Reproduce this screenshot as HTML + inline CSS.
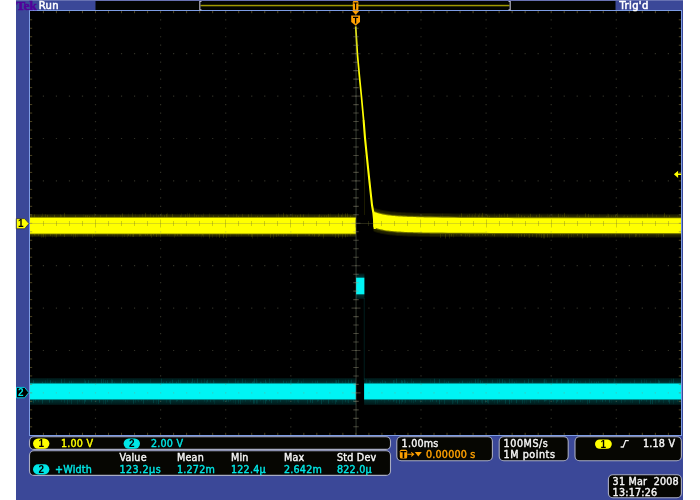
<!DOCTYPE html>
<html><head><meta charset="utf-8"><title>Tek Run Trig'd</title>
<style>
html,body{margin:0;padding:0;background:#fff;}
body{width:700px;height:500px;overflow:hidden;}
svg{display:block;will-change:transform;}
text{font-family:"DejaVu Sans","Liberation Sans",sans-serif;font-size:9.6px;letter-spacing:.2px;}
.w{fill:#f6f6f6;stroke:#f6f6f6;stroke-width:.4px;}
.y{fill:#ffff00;stroke:#ffff00;stroke-width:.4px;}
.c{fill:#00e6e6;stroke:#00e6e6;stroke-width:.4px;}
.o{fill:#ffa000;stroke:#ffa000;stroke-width:.4px;}
.k{fill:#000;stroke:#000;stroke-width:.4px;}
</style></head><body>
<svg width="700" height="500" viewBox="0 0 700 500">
<defs>
<linearGradient id="gy" x1="0" y1="0" x2="0" y2="1">
<stop offset="0.0000" stop-color="#ffff00" stop-opacity="0"/>
<stop offset="0.0500" stop-color="#ffff00" stop-opacity="0.11"/>
<stop offset="0.1250" stop-color="#ffff00" stop-opacity="0.19"/>
<stop offset="0.1583" stop-color="#ffff00" stop-opacity="0.46"/>
<stop offset="0.1958" stop-color="#ffff00" stop-opacity="1"/>
<stop offset="0.8167" stop-color="#ffff00" stop-opacity="1"/>
<stop offset="0.8542" stop-color="#ffff00" stop-opacity="0.46"/>
<stop offset="0.8875" stop-color="#ffff00" stop-opacity="0.19"/>
<stop offset="0.9500" stop-color="#ffff00" stop-opacity="0.11"/>
<stop offset="1.0000" stop-color="#ffff00" stop-opacity="0"/>
</linearGradient>
<linearGradient id="gc" x1="0" y1="0" x2="0" y2="1">
<stop offset="0.0000" stop-color="#00f4f4" stop-opacity="0"/>
<stop offset="0.0429" stop-color="#00f4f4" stop-opacity="0.11"/>
<stop offset="0.1750" stop-color="#00f4f4" stop-opacity="0.19"/>
<stop offset="0.2036" stop-color="#00f4f4" stop-opacity="0.46"/>
<stop offset="0.2357" stop-color="#00f4f4" stop-opacity="1"/>
<stop offset="0.7607" stop-color="#00f4f4" stop-opacity="1"/>
<stop offset="0.7929" stop-color="#00f4f4" stop-opacity="0.46"/>
<stop offset="0.8214" stop-color="#00f4f4" stop-opacity="0.19"/>
<stop offset="0.9571" stop-color="#00f4f4" stop-opacity="0.11"/>
<stop offset="1.0000" stop-color="#00f4f4" stop-opacity="0"/>
</linearGradient>
<linearGradient id="gp" x1="0" y1="0" x2="0" y2="1">
<stop offset="0.0000" stop-color="#00f4f4" stop-opacity="0"/>
<stop offset="0.0453" stop-color="#00f4f4" stop-opacity="0.11"/>
<stop offset="0.1396" stop-color="#00f4f4" stop-opacity="0.19"/>
<stop offset="0.1698" stop-color="#00f4f4" stop-opacity="0.46"/>
<stop offset="0.2038" stop-color="#00f4f4" stop-opacity="1"/>
<stop offset="0.7774" stop-color="#00f4f4" stop-opacity="1"/>
<stop offset="0.8113" stop-color="#00f4f4" stop-opacity="0.46"/>
<stop offset="0.8415" stop-color="#00f4f4" stop-opacity="0.19"/>
<stop offset="0.9547" stop-color="#00f4f4" stop-opacity="0.11"/>
<stop offset="1.0000" stop-color="#00f4f4" stop-opacity="0"/>
</linearGradient>
</defs>

<rect x="16" y="0" width="667" height="500" fill="#3b4898"/>
<rect x="16" y="0" width="667" height="1" fill="#6872b2"/>
<rect x="95.5" y="1" width="520" height="9.5" fill="#020402"/>
<rect x="29.5" y="10.5" width="652.0" height="425.0" fill="#000" stroke="#7d9ce4" stroke-width="1"/>
<rect x="30" y="213.5" width="325.9" height="24" fill="url(#gy)"/>
<path d="M373.4,207.3 L374.9,207.9 L376.4,208.4 L377.9,208.9 L379.4,209.3 L380.9,209.7 L382.4,210.0 L383.9,210.3 L385.4,210.6 L386.9,210.8 L388.4,211.0 L389.9,211.2 L391.4,211.4 L392.9,211.5 L394.4,211.6 L395.9,211.8 L397.4,211.9 L398.9,212.0 L400.4,212.1 L401.9,212.2 L403.4,212.3 L404.9,212.3 L406.4,212.4 L407.9,212.5 L409.4,212.5 L410.9,212.6 L412.4,212.6 L413.9,212.7 L415.4,212.7 L416.9,212.8 L418.4,212.8 L419.9,212.9 L421.4,212.9 L422.9,212.9 L424.4,213.0 L425.9,213.0 L427.4,213.0 L428.9,213.0 L430.4,213.1 L436.4,213.2 L442.4,213.3 L448.4,213.3 L454.4,213.4 L460.4,213.5 L466.4,213.5 L472.4,213.6 L478.4,213.6 L484.4,213.6 L490.4,213.7 L496.4,213.7 L502.4,213.7 L508.4,213.7 L514.4,213.8 L520.4,213.8 L526.4,213.8 L532.4,213.8 L538.4,213.8 L544.4,213.8 L550.4,213.8 L556.4,213.8 L562.4,213.8 L592.4,213.9 L622.4,213.9 L652.4,213.9 L681.0,213.9 L681.0,237.4 L652.4,237.4 L622.4,237.4 L592.4,237.4 L562.4,237.4 L556.4,237.4 L550.4,237.4 L544.4,237.4 L538.4,237.4 L532.4,237.3 L526.4,237.3 L520.4,237.3 L514.4,237.3 L508.4,237.3 L502.4,237.3 L496.4,237.3 L490.4,237.3 L484.4,237.2 L478.4,237.2 L472.4,237.2 L466.4,237.2 L460.4,237.1 L454.4,237.1 L448.4,237.1 L442.4,237.0 L436.4,236.9 L430.4,236.9 L428.9,236.8 L427.4,236.8 L425.9,236.8 L424.4,236.8 L422.9,236.8 L421.4,236.7 L419.9,236.7 L418.4,236.7 L416.9,236.6 L415.4,236.6 L413.9,236.6 L412.4,236.5 L410.9,236.5 L409.4,236.4 L407.9,236.4 L406.4,236.3 L404.9,236.3 L403.4,236.2 L401.9,236.1 L400.4,236.0 L398.9,236.0 L397.4,235.9 L395.9,235.7 L394.4,235.6 L392.9,235.5 L391.4,235.3 L389.9,235.2 L388.4,235.0 L386.9,234.8 L385.4,234.6 L383.9,234.3 L382.4,234.0 L380.9,233.7 L379.4,233.3 L377.9,232.9 L376.4,232.4 L374.9,231.9 L373.4,231.2Z" fill="#ffff00" fill-opacity="0.08"/>
<path d="M373.4,208.3 L374.9,208.9 L376.4,209.4 L377.9,209.9 L379.4,210.3 L380.9,210.7 L382.4,211.0 L383.9,211.3 L385.4,211.6 L386.9,211.8 L388.4,212.0 L389.9,212.2 L391.4,212.4 L392.9,212.5 L394.4,212.6 L395.9,212.8 L397.4,212.9 L398.9,213.0 L400.4,213.1 L401.9,213.2 L403.4,213.3 L404.9,213.3 L406.4,213.4 L407.9,213.5 L409.4,213.5 L410.9,213.6 L412.4,213.6 L413.9,213.7 L415.4,213.7 L416.9,213.8 L418.4,213.8 L419.9,213.9 L421.4,213.9 L422.9,213.9 L424.4,214.0 L425.9,214.0 L427.4,214.0 L428.9,214.0 L430.4,214.1 L436.4,214.2 L442.4,214.3 L448.4,214.3 L454.4,214.4 L460.4,214.5 L466.4,214.5 L472.4,214.6 L478.4,214.6 L484.4,214.6 L490.4,214.7 L496.4,214.7 L502.4,214.7 L508.4,214.7 L514.4,214.8 L520.4,214.8 L526.4,214.8 L532.4,214.8 L538.4,214.8 L544.4,214.8 L550.4,214.8 L556.4,214.8 L562.4,214.8 L592.4,214.9 L622.4,214.9 L652.4,214.9 L681.0,214.9 L681.0,236.4 L652.4,236.4 L622.4,236.4 L592.4,236.4 L562.4,236.4 L556.4,236.4 L550.4,236.4 L544.4,236.4 L538.4,236.4 L532.4,236.3 L526.4,236.3 L520.4,236.3 L514.4,236.3 L508.4,236.3 L502.4,236.3 L496.4,236.3 L490.4,236.3 L484.4,236.2 L478.4,236.2 L472.4,236.2 L466.4,236.2 L460.4,236.1 L454.4,236.1 L448.4,236.1 L442.4,236.0 L436.4,235.9 L430.4,235.9 L428.9,235.8 L427.4,235.8 L425.9,235.8 L424.4,235.8 L422.9,235.8 L421.4,235.7 L419.9,235.7 L418.4,235.7 L416.9,235.6 L415.4,235.6 L413.9,235.6 L412.4,235.5 L410.9,235.5 L409.4,235.4 L407.9,235.4 L406.4,235.3 L404.9,235.3 L403.4,235.2 L401.9,235.1 L400.4,235.0 L398.9,235.0 L397.4,234.9 L395.9,234.7 L394.4,234.6 L392.9,234.5 L391.4,234.3 L389.9,234.2 L388.4,234.0 L386.9,233.8 L385.4,233.6 L383.9,233.3 L382.4,233.0 L380.9,232.7 L379.4,232.3 L377.9,231.9 L376.4,231.4 L374.9,230.9 L373.4,230.2Z" fill="#ffff00" fill-opacity="0.06"/>
<path d="M373.4,210.0 L374.9,210.6 L376.4,211.1 L377.9,211.6 L379.4,212.0 L380.9,212.4 L382.4,212.7 L383.9,213.0 L385.4,213.3 L386.9,213.5 L388.4,213.7 L389.9,213.9 L391.4,214.1 L392.9,214.2 L394.4,214.3 L395.9,214.5 L397.4,214.6 L398.9,214.7 L400.4,214.8 L401.9,214.9 L403.4,215.0 L404.9,215.0 L406.4,215.1 L407.9,215.2 L409.4,215.2 L410.9,215.3 L412.4,215.3 L413.9,215.4 L415.4,215.4 L416.9,215.5 L418.4,215.5 L419.9,215.6 L421.4,215.6 L422.9,215.6 L424.4,215.7 L425.9,215.7 L427.4,215.7 L428.9,215.7 L430.4,215.8 L436.4,215.9 L442.4,216.0 L448.4,216.0 L454.4,216.1 L460.4,216.2 L466.4,216.2 L472.4,216.3 L478.4,216.3 L484.4,216.3 L490.4,216.4 L496.4,216.4 L502.4,216.4 L508.4,216.4 L514.4,216.5 L520.4,216.5 L526.4,216.5 L532.4,216.5 L538.4,216.5 L544.4,216.5 L550.4,216.5 L556.4,216.5 L562.4,216.5 L592.4,216.6 L622.4,216.6 L652.4,216.6 L681.0,216.6 L681.0,234.7 L652.4,234.7 L622.4,234.7 L592.4,234.7 L562.4,234.7 L556.4,234.7 L550.4,234.7 L544.4,234.7 L538.4,234.7 L532.4,234.6 L526.4,234.6 L520.4,234.6 L514.4,234.6 L508.4,234.6 L502.4,234.6 L496.4,234.6 L490.4,234.6 L484.4,234.5 L478.4,234.5 L472.4,234.5 L466.4,234.5 L460.4,234.4 L454.4,234.4 L448.4,234.4 L442.4,234.3 L436.4,234.2 L430.4,234.2 L428.9,234.1 L427.4,234.1 L425.9,234.1 L424.4,234.1 L422.9,234.1 L421.4,234.0 L419.9,234.0 L418.4,234.0 L416.9,233.9 L415.4,233.9 L413.9,233.9 L412.4,233.8 L410.9,233.8 L409.4,233.7 L407.9,233.7 L406.4,233.6 L404.9,233.6 L403.4,233.5 L401.9,233.4 L400.4,233.3 L398.9,233.3 L397.4,233.2 L395.9,233.0 L394.4,232.9 L392.9,232.8 L391.4,232.6 L389.9,232.5 L388.4,232.3 L386.9,232.1 L385.4,231.9 L383.9,231.6 L382.4,231.3 L380.9,231.0 L379.4,230.6 L377.9,230.2 L376.4,229.7 L374.9,229.2 L373.4,228.6Z" fill="#ffff00" fill-opacity="0.1"/>
<path d="M373.4,210.8 L374.9,211.4 L376.4,211.9 L377.9,212.4 L379.4,212.8 L380.9,213.2 L382.4,213.5 L383.9,213.8 L385.4,214.1 L386.9,214.3 L388.4,214.5 L389.9,214.7 L391.4,214.9 L392.9,215.0 L394.4,215.1 L395.9,215.3 L397.4,215.4 L398.9,215.5 L400.4,215.6 L401.9,215.7 L403.4,215.8 L404.9,215.8 L406.4,215.9 L407.9,216.0 L409.4,216.0 L410.9,216.1 L412.4,216.1 L413.9,216.2 L415.4,216.2 L416.9,216.3 L418.4,216.3 L419.9,216.4 L421.4,216.4 L422.9,216.4 L424.4,216.5 L425.9,216.5 L427.4,216.5 L428.9,216.5 L430.4,216.6 L436.4,216.7 L442.4,216.8 L448.4,216.8 L454.4,216.9 L460.4,217.0 L466.4,217.0 L472.4,217.1 L478.4,217.1 L484.4,217.1 L490.4,217.2 L496.4,217.2 L502.4,217.2 L508.4,217.2 L514.4,217.3 L520.4,217.3 L526.4,217.3 L532.4,217.3 L538.4,217.3 L544.4,217.3 L550.4,217.3 L556.4,217.3 L562.4,217.3 L592.4,217.4 L622.4,217.4 L652.4,217.4 L681.0,217.4 L681.0,233.9 L652.4,233.9 L622.4,233.9 L592.4,233.9 L562.4,233.9 L556.4,233.9 L550.4,233.9 L544.4,233.9 L538.4,233.9 L532.4,233.8 L526.4,233.8 L520.4,233.8 L514.4,233.8 L508.4,233.8 L502.4,233.8 L496.4,233.8 L490.4,233.8 L484.4,233.7 L478.4,233.7 L472.4,233.7 L466.4,233.7 L460.4,233.6 L454.4,233.6 L448.4,233.6 L442.4,233.5 L436.4,233.4 L430.4,233.4 L428.9,233.3 L427.4,233.3 L425.9,233.3 L424.4,233.3 L422.9,233.3 L421.4,233.2 L419.9,233.2 L418.4,233.2 L416.9,233.1 L415.4,233.1 L413.9,233.1 L412.4,233.0 L410.9,233.0 L409.4,232.9 L407.9,232.9 L406.4,232.8 L404.9,232.8 L403.4,232.7 L401.9,232.6 L400.4,232.5 L398.9,232.5 L397.4,232.4 L395.9,232.2 L394.4,232.1 L392.9,232.0 L391.4,231.8 L389.9,231.7 L388.4,231.5 L386.9,231.3 L385.4,231.1 L383.9,230.8 L382.4,230.5 L380.9,230.2 L379.4,229.8 L377.9,229.4 L376.4,228.9 L374.9,228.4 L373.4,227.8Z" fill="#ffff00" fill-opacity="0.36"/>
<path d="M373.4,211.7 L374.9,212.3 L376.4,212.8 L377.9,213.3 L379.4,213.7 L380.9,214.1 L382.4,214.4 L383.9,214.7 L385.4,215.0 L386.9,215.2 L388.4,215.4 L389.9,215.6 L391.4,215.8 L392.9,215.9 L394.4,216.0 L395.9,216.2 L397.4,216.3 L398.9,216.4 L400.4,216.5 L401.9,216.6 L403.4,216.7 L404.9,216.7 L406.4,216.8 L407.9,216.9 L409.4,216.9 L410.9,217.0 L412.4,217.0 L413.9,217.1 L415.4,217.1 L416.9,217.2 L418.4,217.2 L419.9,217.3 L421.4,217.3 L422.9,217.3 L424.4,217.4 L425.9,217.4 L427.4,217.4 L428.9,217.4 L430.4,217.5 L436.4,217.6 L442.4,217.7 L448.4,217.7 L454.4,217.8 L460.4,217.9 L466.4,217.9 L472.4,218.0 L478.4,218.0 L484.4,218.0 L490.4,218.1 L496.4,218.1 L502.4,218.1 L508.4,218.1 L514.4,218.2 L520.4,218.2 L526.4,218.2 L532.4,218.2 L538.4,218.2 L544.4,218.2 L550.4,218.2 L556.4,218.2 L562.4,218.2 L592.4,218.3 L622.4,218.3 L652.4,218.3 L681.0,218.3 L681.0,233.0 L652.4,233.0 L622.4,233.0 L592.4,233.0 L562.4,233.0 L556.4,233.0 L550.4,233.0 L544.4,233.0 L538.4,233.0 L532.4,232.9 L526.4,232.9 L520.4,232.9 L514.4,232.9 L508.4,232.9 L502.4,232.9 L496.4,232.9 L490.4,232.9 L484.4,232.8 L478.4,232.8 L472.4,232.8 L466.4,232.8 L460.4,232.7 L454.4,232.7 L448.4,232.7 L442.4,232.6 L436.4,232.5 L430.4,232.5 L428.9,232.4 L427.4,232.4 L425.9,232.4 L424.4,232.4 L422.9,232.4 L421.4,232.3 L419.9,232.3 L418.4,232.3 L416.9,232.2 L415.4,232.2 L413.9,232.2 L412.4,232.1 L410.9,232.1 L409.4,232.0 L407.9,232.0 L406.4,231.9 L404.9,231.9 L403.4,231.8 L401.9,231.7 L400.4,231.6 L398.9,231.6 L397.4,231.5 L395.9,231.3 L394.4,231.2 L392.9,231.1 L391.4,230.9 L389.9,230.8 L388.4,230.6 L386.9,230.4 L385.4,230.2 L383.9,229.9 L382.4,229.6 L380.9,229.3 L379.4,228.9 L377.9,228.5 L376.4,228.0 L374.9,227.5 L373.4,226.8Z" fill="#ffff00" fill-opacity="1"/>
<path d="M355.7,26.5 L357.4,54 L359.4,76 L361.4,96 L363.6,120" fill="none" stroke="#ffff00" stroke-width="1.7" stroke-linejoin="round"/>
<path d="M363.6,120 L365.0,138 L367.0,158 L369.4,181 L372.0,205 L373.4,213 L374.0,219 L374.5,225 L374.8,229" fill="none" stroke="#ffff00" stroke-width="2.1" stroke-linejoin="round"/>
<rect x="364" y="155" width="0.9" height="60" fill="#ffff00" fill-opacity="0.12"/>
<rect x="30" y="377.5" width="325.9" height="28" fill="url(#gc)"/>
<rect x="364.1" y="377.5" width="316.9" height="28" fill="url(#gc)"/>
<rect x="356" y="273" width="8.4" height="26.5" fill="url(#gp)"/>
<rect x="363.8" y="298" width="0.8" height="82" fill="#00a0a0" fill-opacity="0.22"/>
<path d="M31.5,217.3v-2M34.5,217.3v-3M34.5,234.0v1.5M43.5,234.0v3.5M47.5,217.3v-2.5M54.5,217.3v-2.5M56.5,234.0v3.5M60.5,234.0v1.5M64.5,217.3v-4.5M64.5,234.0v3M75.5,217.3v-2M85.5,217.3v-2M87.5,217.3v-2M89.5,217.3v-1.5M120.5,217.3v-2M122.5,217.3v-4M128.5,234.0v2M133.5,234.0v3M139.5,234.0v2.5M145.5,217.3v-4.5M147.5,234.0v1.5M153.5,217.3v-2M153.5,234.0v1.5M156.5,234.0v3M164.5,217.3v-2M166.5,217.3v-3.5M172.5,217.3v-3.5M181.5,234.0v2M202.5,234.0v1.5M209.5,234.0v4.5M218.5,217.3v-1.5M219.5,234.0v4M223.5,234.0v4M238.5,217.3v-1.5M248.5,217.3v-3M248.5,234.0v1.5M257.5,217.3v-1.5M262.5,217.3v-2.5M270.5,234.0v4M283.5,217.3v-4.5M297.5,217.3v-2M297.5,234.0v3M300.5,217.3v-3M303.5,217.3v-3M314.5,234.0v2.5M319.5,217.3v-3M319.5,234.0v2M328.5,217.3v-3.5M338.5,217.3v-4M338.5,234.0v4M341.5,217.3v-2.5M345.5,217.3v-4M345.5,234.0v3.5M347.5,217.3v-4M350.5,217.3v-1.5" stroke="#ffff00" stroke-opacity="0.13" stroke-width="1" fill="none"/>
<path d="M32.5,234.0v3.5M35.5,234.0v2M38.5,217.3v-2M42.5,234.0v3.5M50.5,217.3v-1.5M52.5,234.0v4M54.5,234.0v3M55.5,234.0v4M77.5,234.0v3.5M83.5,217.3v-3M83.5,234.0v3M85.5,234.0v2.5M86.5,217.3v-2M92.5,217.3v-2.5M112.5,234.0v2M114.5,234.0v3.5M117.5,234.0v4M122.5,234.0v4M124.5,217.3v-2M128.5,217.3v-4M135.5,217.3v-3.5M139.5,217.3v-3M141.5,234.0v3.5M158.5,234.0v2.5M160.5,217.3v-3M162.5,217.3v-2.5M169.5,234.0v2.5M187.5,234.0v2.5M189.5,234.0v1.5M201.5,234.0v4.5M216.5,234.0v4M230.5,234.0v3M233.5,217.3v-4M236.5,234.0v3M238.5,234.0v3M241.5,234.0v2M255.5,217.3v-2M257.5,234.0v4.5M281.5,217.3v-3M281.5,234.0v2M292.5,234.0v2.5M305.5,234.0v2M308.5,217.3v-4.5M314.5,217.3v-2M330.5,217.3v-4M340.5,234.0v1.5" stroke="#ffff00" stroke-opacity="0.04" stroke-width="1" fill="none"/>
<path d="M38.5,234.0v2M41.5,217.3v-1.5M45.5,217.3v-3M50.5,234.0v2M60.5,217.3v-3M75.5,234.0v3.5M87.5,234.0v2.5M92.5,234.0v4M94.5,234.0v2M100.5,217.3v-2M106.5,217.3v-3M107.5,234.0v2M132.5,217.3v-4.5M140.5,234.0v2M145.5,234.0v2M150.5,234.0v2M151.5,234.0v4M158.5,217.3v-2.5M160.5,234.0v3.5M167.5,234.0v1.5M177.5,234.0v2M180.5,217.3v-2M180.5,234.0v1.5M185.5,217.3v-3M189.5,217.3v-4M194.5,217.3v-4M196.5,217.3v-2.5M198.5,234.0v1.5M213.5,217.3v-2M226.5,234.0v4M228.5,217.3v-2.5M236.5,217.3v-3.5M242.5,217.3v-3.5M251.5,234.0v3M252.5,234.0v4.5M260.5,217.3v-1.5M262.5,234.0v2M273.5,234.0v4.5M276.5,234.0v3M278.5,217.3v-4M278.5,234.0v2M283.5,234.0v3M286.5,234.0v2M287.5,217.3v-2.5M309.5,234.0v2M312.5,234.0v1.5M318.5,234.0v3M321.5,217.3v-1.5M323.5,234.0v4.5M324.5,217.3v-2M326.5,217.3v-2M335.5,234.0v4M342.5,234.0v4.5M350.5,234.0v1.5" stroke="#ffff00" stroke-opacity="0.1" stroke-width="1" fill="none"/>
<path d="M41.5,234.0v4M42.5,217.3v-4M45.5,234.0v4.5M61.5,217.3v-2.5M71.5,234.0v2M73.5,234.0v4.5M94.5,217.3v-4M114.5,217.3v-2.5M124.5,234.0v3M127.5,234.0v3.5M130.5,234.0v2.5M132.5,234.0v3M142.5,217.3v-3.5M150.5,217.3v-4M156.5,217.3v-4M161.5,217.3v-4.5M167.5,217.3v-4.5M174.5,234.0v4M175.5,234.0v2M181.5,217.3v-4M187.5,217.3v-4.5M194.5,234.0v2M198.5,217.3v-2.5M201.5,217.3v-2.5M202.5,217.3v-1.5M203.5,217.3v-4M203.5,234.0v3.5M209.5,217.3v-4M212.5,234.0v4M251.5,217.3v-4M276.5,217.3v-3.5M286.5,217.3v-3.5M292.5,217.3v-4M295.5,217.3v-2.5M308.5,234.0v2M318.5,217.3v-2M332.5,234.0v1.5M335.5,217.3v-1.5M342.5,217.3v-4.5M347.5,234.0v3" stroke="#ffff00" stroke-opacity="0.07" stroke-width="1" fill="none"/>
<path d="M440.5,217.3v-2.5M442.5,217.3v-4M442.5,234.0v2M456.5,234.0v1.5M471.5,217.3v-2M475.5,234.0v2.5M494.5,217.3v-4.5M501.5,234.0v1.5M504.5,234.0v4.5M511.5,234.0v2M514.5,234.0v2.5M516.5,234.0v3.5M528.5,234.0v4M532.5,217.3v-1.5M547.5,217.3v-3.5M549.5,234.0v4.5M552.5,217.3v-3.5M558.5,234.0v2.5M560.5,217.3v-3.5M568.5,217.3v-2.5M573.5,234.0v3.5M576.5,217.3v-2M590.5,217.3v-2M599.5,217.3v-3.5M606.5,234.0v2M607.5,217.3v-4M608.5,234.0v4.5M611.5,234.0v1.5M613.5,217.3v-2M621.5,234.0v3.5M631.5,234.0v1.5M636.5,217.3v-4M642.5,217.3v-3.5M656.5,234.0v4M663.5,217.3v-1.5M677.5,217.3v-2.5" stroke="#ffff00" stroke-opacity="0.04" stroke-width="1" fill="none"/>
<path d="M440.5,234.0v4M449.5,234.0v4.5M465.5,234.0v2.5M469.5,234.0v3M478.5,217.3v-2.5M478.5,234.0v2M487.5,217.3v-2.5M487.5,234.0v1.5M489.5,217.3v-1.5M499.5,217.3v-3.5M518.5,234.0v4M529.5,234.0v4M532.5,234.0v3M536.5,217.3v-2.5M536.5,234.0v3.5M541.5,234.0v4M543.5,234.0v4.5M544.5,234.0v4.5M552.5,234.0v3.5M560.5,234.0v1.5M568.5,234.0v4.5M579.5,217.3v-1.5M585.5,234.0v1.5M587.5,234.0v4M593.5,217.3v-3M608.5,217.3v-3.5M615.5,234.0v2.5M617.5,217.3v-4.5M629.5,234.0v4.5M636.5,234.0v2.5M647.5,217.3v-4M647.5,234.0v2M666.5,217.3v-2" stroke="#ffff00" stroke-opacity="0.1" stroke-width="1" fill="none"/>
<path d="M445.5,234.0v4.5M451.5,234.0v2.5M461.5,217.3v-4M461.5,234.0v2M482.5,217.3v-4.5M482.5,234.0v1.5M485.5,234.0v2M492.5,234.0v1.5M494.5,234.0v2.5M507.5,217.3v-3.5M518.5,217.3v-3.5M521.5,217.3v-2M521.5,234.0v2.5M524.5,217.3v-1.5M524.5,234.0v3M528.5,217.3v-1.5M530.5,217.3v-3.5M539.5,217.3v-3.5M547.5,234.0v3.5M558.5,217.3v-3.5M564.5,217.3v-4.5M577.5,234.0v2M582.5,234.0v4.5M585.5,217.3v-4M588.5,217.3v-3.5M615.5,217.3v-2.5M627.5,217.3v-1.5M635.5,234.0v3M663.5,234.0v3M664.5,217.3v-4.5M669.5,217.3v-2" stroke="#ffff00" stroke-opacity="0.13" stroke-width="1" fill="none"/>
<path d="M453.5,234.0v3.5M459.5,217.3v-2.5M460.5,234.0v1.5M467.5,217.3v-2.5M467.5,234.0v2M469.5,217.3v-3.5M472.5,217.3v-3M474.5,217.3v-2.5M474.5,234.0v2M475.5,217.3v-4.5M479.5,217.3v-4M481.5,217.3v-2.5M496.5,217.3v-1.5M501.5,217.3v-2.5M504.5,217.3v-4.5M507.5,234.0v4M516.5,217.3v-4M526.5,234.0v1.5M539.5,234.0v2.5M541.5,217.3v-2M549.5,217.3v-2.5M562.5,217.3v-2.5M562.5,234.0v2.5M564.5,234.0v1.5M566.5,217.3v-1.5M571.5,234.0v3M577.5,217.3v-3.5M591.5,217.3v-2M602.5,234.0v2.5M605.5,234.0v2M606.5,217.3v-1.5M611.5,217.3v-2M623.5,217.3v-1.5M624.5,217.3v-2.5M624.5,234.0v3.5M631.5,217.3v-2M639.5,234.0v3M642.5,234.0v2.5M652.5,217.3v-4.5M656.5,217.3v-2.5M658.5,234.0v3" stroke="#ffff00" stroke-opacity="0.07" stroke-width="1" fill="none"/>
<path d="M33.5,383.2v-3M33.5,399.7v3.5M35.5,399.7v1.5M42.5,383.2v-1.5M42.5,399.7v4M49.5,399.7v3M50.5,383.2v-3M61.5,383.2v-4M71.5,383.2v-2.5M84.5,399.7v4M85.5,383.2v-2.5M85.5,399.7v2M88.5,383.2v-3M91.5,399.7v2.5M99.5,399.7v3M101.5,383.2v-4M107.5,383.2v-3M112.5,383.2v-3.5M112.5,399.7v1.5M121.5,383.2v-4M133.5,383.2v-3M133.5,399.7v4M143.5,399.7v4M153.5,399.7v3.5M158.5,399.7v4.5M161.5,383.2v-4.5M166.5,383.2v-2M170.5,399.7v4.5M172.5,383.2v-3.5M176.5,383.2v-1.5M192.5,383.2v-4.5M197.5,383.2v-4.5M207.5,383.2v-3.5M213.5,383.2v-3M223.5,399.7v2M226.5,399.7v2M252.5,383.2v-1.5M253.5,399.7v4M254.5,383.2v-4.5M260.5,383.2v-1.5M265.5,383.2v-3.5M265.5,399.7v4M266.5,399.7v1.5M269.5,399.7v1.5M271.5,399.7v3.5M283.5,383.2v-2.5M290.5,383.2v-3M310.5,399.7v3M312.5,399.7v3.5M317.5,383.2v-2.5M321.5,399.7v4.5M328.5,399.7v4M336.5,383.2v-3M338.5,383.2v-3.5M348.5,383.2v-3.5M351.5,383.2v-3.5M353.5,399.7v1.5" stroke="#00f4f4" stroke-opacity="0.13" stroke-width="1" fill="none"/>
<path d="M38.5,399.7v2.5M45.5,383.2v-3M52.5,383.2v-1.5M52.5,399.7v3M55.5,383.2v-2M61.5,399.7v2.5M64.5,383.2v-4.5M77.5,399.7v4.5M79.5,399.7v2M84.5,383.2v-4M103.5,399.7v4.5M114.5,383.2v-1.5M135.5,399.7v3M138.5,383.2v-1.5M138.5,399.7v2.5M150.5,383.2v-4M166.5,399.7v3M169.5,399.7v3M170.5,383.2v-2M180.5,383.2v-3.5M194.5,383.2v-3M201.5,383.2v-3.5M204.5,383.2v-4.5M204.5,399.7v2M213.5,399.7v2M214.5,399.7v4.5M228.5,383.2v-3M235.5,399.7v4.5M237.5,383.2v-2.5M238.5,383.2v-3M245.5,383.2v-3.5M245.5,399.7v2M250.5,399.7v2M257.5,399.7v4M260.5,399.7v1.5M261.5,383.2v-1.5M263.5,399.7v4M266.5,383.2v-1.5M271.5,383.2v-2M297.5,399.7v2.5M298.5,399.7v3.5M312.5,383.2v-2.5M315.5,383.2v-2.5M323.5,399.7v2M326.5,383.2v-2.5M335.5,383.2v-3.5M342.5,383.2v-2.5M342.5,399.7v4.5M345.5,383.2v-3.5" stroke="#00f4f4" stroke-opacity="0.07" stroke-width="1" fill="none"/>
<path d="M47.5,383.2v-4.5M69.5,399.7v3M73.5,383.2v-2.5M82.5,399.7v4M91.5,383.2v-2M96.5,383.2v-4M96.5,399.7v2.5M111.5,399.7v4M123.5,383.2v-2M123.5,399.7v1.5M127.5,399.7v3.5M130.5,383.2v-1.5M135.5,383.2v-3M137.5,399.7v1.5M147.5,399.7v1.5M156.5,399.7v4.5M180.5,399.7v2M191.5,399.7v3.5M196.5,399.7v1.5M197.5,399.7v4.5M206.5,399.7v3.5M210.5,383.2v-3M214.5,383.2v-2M224.5,399.7v2M233.5,399.7v3.5M242.5,399.7v3M247.5,383.2v-1.5M257.5,383.2v-3M263.5,383.2v-2.5M274.5,383.2v-4.5M277.5,399.7v3.5M286.5,399.7v3M288.5,383.2v-2M288.5,399.7v2M294.5,399.7v3.5M303.5,383.2v-4M332.5,383.2v-1.5M332.5,399.7v3.5M347.5,399.7v3M351.5,399.7v2.5M353.5,383.2v-1.5" stroke="#00f4f4" stroke-opacity="0.04" stroke-width="1" fill="none"/>
<path d="M64.5,399.7v3M67.5,399.7v4.5M69.5,383.2v-2.5M71.5,399.7v4.5M103.5,383.2v-4M105.5,383.2v-3M105.5,399.7v4.5M107.5,399.7v2.5M111.5,383.2v-4M125.5,399.7v2.5M127.5,383.2v-1.5M141.5,399.7v1.5M163.5,383.2v-1.5M169.5,383.2v-1.5M176.5,399.7v2M177.5,399.7v1.5M178.5,383.2v-3.5M182.5,399.7v3.5M187.5,383.2v-3M191.5,383.2v-1.5M192.5,399.7v2M194.5,399.7v1.5M206.5,383.2v-2.5M207.5,399.7v2M210.5,399.7v2.5M228.5,399.7v2.5M230.5,399.7v1.5M235.5,383.2v-4.5M238.5,399.7v4M240.5,399.7v4.5M242.5,383.2v-4.5M253.5,383.2v-2.5M254.5,399.7v4M256.5,383.2v-4.5M256.5,399.7v4M269.5,383.2v-4.5M280.5,399.7v2.5M286.5,383.2v-2M291.5,383.2v-4M297.5,383.2v-1.5M298.5,383.2v-3.5M301.5,383.2v-2M307.5,399.7v4M317.5,399.7v2M318.5,399.7v1.5M335.5,399.7v4.5M336.5,399.7v2.5M345.5,399.7v2.5M348.5,399.7v3.5" stroke="#00f4f4" stroke-opacity="0.1" stroke-width="1" fill="none"/>
<path d="M366.5,383.2v-4M375.5,399.7v4.5M394.5,383.2v-3.5M394.5,399.7v1.5M401.5,399.7v4.5M405.5,383.2v-2.5M411.5,383.2v-4.5M411.5,399.7v3M413.5,399.7v3.5M420.5,383.2v-2.5M420.5,399.7v3.5M444.5,383.2v-3.5M455.5,399.7v2.5M462.5,399.7v4M469.5,383.2v-2M471.5,399.7v2.5M473.5,399.7v3M477.5,383.2v-4M478.5,383.2v-4.5M481.5,399.7v3M497.5,383.2v-4M499.5,399.7v2.5M504.5,383.2v-3M505.5,383.2v-2M512.5,383.2v-4M524.5,399.7v4M532.5,399.7v1.5M536.5,399.7v1.5M538.5,399.7v3M546.5,383.2v-3.5M546.5,399.7v1.5M549.5,399.7v4.5M557.5,383.2v-4M567.5,383.2v-2.5M585.5,383.2v-2.5M589.5,383.2v-4M594.5,383.2v-2M602.5,383.2v-1.5M607.5,383.2v-4.5M613.5,383.2v-1.5M630.5,383.2v-1.5M632.5,399.7v3.5M644.5,383.2v-4M646.5,383.2v-3.5M650.5,383.2v-2.5M658.5,399.7v3M659.5,399.7v2.5M663.5,399.7v3.5M669.5,383.2v-3M671.5,383.2v-4.5M673.5,399.7v4.5M677.5,399.7v2.5" stroke="#00f4f4" stroke-opacity="0.07" stroke-width="1" fill="none"/>
<path d="M369.5,383.2v-3M370.5,383.2v-2.5M372.5,383.2v-1.5M380.5,383.2v-1.5M382.5,383.2v-3M388.5,399.7v1.5M396.5,399.7v3.5M405.5,399.7v3M407.5,383.2v-1.5M430.5,399.7v2.5M436.5,399.7v2.5M444.5,399.7v4.5M446.5,383.2v-1.5M452.5,399.7v4.5M459.5,383.2v-1.5M475.5,399.7v4M477.5,399.7v2M482.5,383.2v-2.5M482.5,399.7v4M488.5,399.7v4M492.5,383.2v-3.5M492.5,399.7v1.5M497.5,399.7v4M499.5,383.2v-4M509.5,383.2v-4M511.5,399.7v3M522.5,399.7v4M524.5,383.2v-3M545.5,399.7v1.5M552.5,383.2v-4.5M553.5,399.7v2.5M556.5,383.2v-3.5M556.5,399.7v3.5M561.5,383.2v-4.5M561.5,399.7v3.5M564.5,399.7v2.5M572.5,383.2v-2M573.5,383.2v-4.5M575.5,383.2v-3M580.5,399.7v2.5M587.5,399.7v4.5M591.5,383.2v-2.5M596.5,399.7v3M598.5,383.2v-2M605.5,399.7v2M614.5,383.2v-4.5M621.5,399.7v3.5M634.5,383.2v-3.5M641.5,383.2v-3.5M646.5,399.7v2M668.5,399.7v2.5" stroke="#00f4f4" stroke-opacity="0.1" stroke-width="1" fill="none"/>
<path d="M377.5,383.2v-1.5M377.5,399.7v4M381.5,399.7v1.5M384.5,383.2v-3M384.5,399.7v3.5M390.5,399.7v2M404.5,399.7v4M409.5,399.7v2M422.5,399.7v3.5M425.5,399.7v2.5M430.5,383.2v-4M432.5,383.2v-2.5M441.5,399.7v2.5M453.5,399.7v4M467.5,383.2v-2M469.5,399.7v2M471.5,383.2v-3M487.5,383.2v-3.5M494.5,399.7v4M501.5,399.7v1.5M511.5,383.2v-4M516.5,383.2v-3M526.5,399.7v4M534.5,399.7v4M543.5,383.2v-3.5M545.5,383.2v-4.5M558.5,399.7v1.5M567.5,399.7v3M570.5,399.7v2M580.5,383.2v-2.5M582.5,399.7v3.5M600.5,399.7v2.5M611.5,399.7v3.5M615.5,383.2v-3.5M616.5,383.2v-2.5M621.5,383.2v-3M624.5,399.7v3M625.5,399.7v2.5M630.5,399.7v3.5M644.5,399.7v1.5M655.5,383.2v-4.5M655.5,399.7v4" stroke="#00f4f4" stroke-opacity="0.04" stroke-width="1" fill="none"/>
<path d="M385.5,383.2v-2M393.5,383.2v-3M393.5,399.7v2M396.5,383.2v-4.5M399.5,399.7v4M401.5,383.2v-3M402.5,383.2v-2.5M402.5,399.7v2.5M404.5,383.2v-3.5M413.5,383.2v-2M415.5,399.7v2M432.5,399.7v2M434.5,383.2v-4.5M439.5,383.2v-4M439.5,399.7v4.5M448.5,383.2v-2M457.5,399.7v4M462.5,383.2v-2.5M475.5,383.2v-4M480.5,383.2v-3M485.5,399.7v3M487.5,399.7v3M502.5,383.2v-4M505.5,399.7v4M509.5,399.7v4.5M514.5,383.2v-1.5M516.5,399.7v3.5M528.5,383.2v-4M530.5,399.7v3.5M532.5,383.2v-3.5M544.5,383.2v-4M544.5,399.7v2M557.5,399.7v2M568.5,383.2v-3.5M575.5,399.7v2.5M577.5,383.2v-2M589.5,399.7v3.5M596.5,383.2v-1.5M602.5,399.7v2.5M609.5,399.7v3M639.5,399.7v4M641.5,399.7v1.5M650.5,399.7v4.5M652.5,399.7v4.5M658.5,383.2v-3.5M659.5,383.2v-2.5M669.5,399.7v4M673.5,383.2v-4.5" stroke="#00f4f4" stroke-opacity="0.13" stroke-width="1" fill="none"/>
<path d="M43.42,11v2.2M43.42,435v-2.2M30,19.78h2.2M681,19.78h-2.2M56.44,11v2.2M56.44,435v-2.2M30,28.26h2.2M681,28.26h-2.2M69.46,11v2.2M69.46,435v-2.2M30,36.74h2.2M681,36.74h-2.2M82.48,11v2.2M82.48,435v-2.2M30,45.22h2.2M681,45.22h-2.2M95.5,11v2.2M95.5,435v-2.2M30,53.7h2.2M681,53.7h-2.2M108.52,11v2.2M108.52,435v-2.2M30,62.18h2.2M681,62.18h-2.2M121.54,11v2.2M121.54,435v-2.2M30,70.66h2.2M681,70.66h-2.2M134.56,11v2.2M134.56,435v-2.2M30,79.14h2.2M681,79.14h-2.2M147.58,11v2.2M147.58,435v-2.2M30,87.62h2.2M681,87.62h-2.2M160.6,11v2.2M160.6,435v-2.2M30,96.1h2.2M681,96.1h-2.2M173.62,11v2.2M173.62,435v-2.2M30,104.58h2.2M681,104.58h-2.2M186.64,11v2.2M186.64,435v-2.2M30,113.06h2.2M681,113.06h-2.2M199.66,11v2.2M199.66,435v-2.2M30,121.54h2.2M681,121.54h-2.2M212.68,11v2.2M212.68,435v-2.2M30,130.02h2.2M681,130.02h-2.2M225.7,11v2.2M225.7,435v-2.2M30,138.5h2.2M681,138.5h-2.2M238.72,11v2.2M238.72,435v-2.2M30,146.98h2.2M681,146.98h-2.2M251.74,11v2.2M251.74,435v-2.2M30,155.46h2.2M681,155.46h-2.2M264.76,11v2.2M264.76,435v-2.2M30,163.94h2.2M681,163.94h-2.2M277.78,11v2.2M277.78,435v-2.2M30,172.42h2.2M681,172.42h-2.2M290.8,11v2.2M290.8,435v-2.2M30,180.9h2.2M681,180.9h-2.2M303.82,11v2.2M303.82,435v-2.2M30,189.38h2.2M681,189.38h-2.2M316.84,11v2.2M316.84,435v-2.2M30,197.86h2.2M681,197.86h-2.2M329.86,11v2.2M329.86,435v-2.2M30,206.34h2.2M681,206.34h-2.2M342.88,11v2.2M342.88,435v-2.2M30,214.82h2.2M681,214.82h-2.2M355.9,11v2.2M355.9,435v-2.2M30,223.3h2.2M681,223.3h-2.2M368.92,11v2.2M368.92,435v-2.2M30,231.78h2.2M681,231.78h-2.2M381.94,11v2.2M381.94,435v-2.2M30,240.26h2.2M681,240.26h-2.2M394.96,11v2.2M394.96,435v-2.2M30,248.74h2.2M681,248.74h-2.2M407.98,11v2.2M407.98,435v-2.2M30,257.22h2.2M681,257.22h-2.2M421,11v2.2M421,435v-2.2M30,265.7h2.2M681,265.7h-2.2M434.02,11v2.2M434.02,435v-2.2M30,274.18h2.2M681,274.18h-2.2M447.04,11v2.2M447.04,435v-2.2M30,282.66h2.2M681,282.66h-2.2M460.06,11v2.2M460.06,435v-2.2M30,291.14h2.2M681,291.14h-2.2M473.08,11v2.2M473.08,435v-2.2M30,299.62h2.2M681,299.62h-2.2M486.1,11v2.2M486.1,435v-2.2M30,308.1h2.2M681,308.1h-2.2M499.12,11v2.2M499.12,435v-2.2M30,316.58h2.2M681,316.58h-2.2M512.14,11v2.2M512.14,435v-2.2M30,325.06h2.2M681,325.06h-2.2M525.16,11v2.2M525.16,435v-2.2M30,333.54h2.2M681,333.54h-2.2M538.18,11v2.2M538.18,435v-2.2M30,342.02h2.2M681,342.02h-2.2M551.2,11v2.2M551.2,435v-2.2M30,350.5h2.2M681,350.5h-2.2M564.22,11v2.2M564.22,435v-2.2M30,358.98h2.2M681,358.98h-2.2M577.24,11v2.2M577.24,435v-2.2M30,367.46h2.2M681,367.46h-2.2M590.26,11v2.2M590.26,435v-2.2M30,375.94h2.2M681,375.94h-2.2M603.28,11v2.2M603.28,435v-2.2M30,384.42h2.2M681,384.42h-2.2M616.3,11v2.2M616.3,435v-2.2M30,392.9h2.2M681,392.9h-2.2M629.32,11v2.2M629.32,435v-2.2M30,401.38h2.2M681,401.38h-2.2M642.34,11v2.2M642.34,435v-2.2M30,409.86h2.2M681,409.86h-2.2M655.36,11v2.2M655.36,435v-2.2M30,418.34h2.2M681,418.34h-2.2M668.38,11v2.2M668.38,435v-2.2M30,426.82h2.2M681,426.82h-2.2" stroke="#8a7a3c" stroke-opacity="0.55" stroke-width="1" fill="none"/>
<path d="M42.82,53.7h1.2M55.84,53.7h1.2M68.86,53.7h1.2M81.88,53.7h1.2M94.9,53.7h1.2M107.92,53.7h1.2M120.94,53.7h1.2M133.96,53.7h1.2M146.98,53.7h1.2M160,53.7h1.2M173.02,53.7h1.2M186.04,53.7h1.2M199.06,53.7h1.2M212.08,53.7h1.2M225.1,53.7h1.2M238.12,53.7h1.2M251.14,53.7h1.2M264.16,53.7h1.2M277.18,53.7h1.2M290.2,53.7h1.2M303.22,53.7h1.2M316.24,53.7h1.2M329.26,53.7h1.2M342.28,53.7h1.2M355.3,53.7h1.2M368.32,53.7h1.2M381.34,53.7h1.2M394.36,53.7h1.2M407.38,53.7h1.2M420.4,53.7h1.2M433.42,53.7h1.2M446.44,53.7h1.2M459.46,53.7h1.2M472.48,53.7h1.2M485.5,53.7h1.2M498.52,53.7h1.2M511.54,53.7h1.2M524.56,53.7h1.2M537.58,53.7h1.2M550.6,53.7h1.2M563.62,53.7h1.2M576.64,53.7h1.2M589.66,53.7h1.2M602.68,53.7h1.2M615.7,53.7h1.2M628.72,53.7h1.2M641.74,53.7h1.2M654.76,53.7h1.2M667.78,53.7h1.2M42.82,96.1h1.2M55.84,96.1h1.2M68.86,96.1h1.2M81.88,96.1h1.2M94.9,96.1h1.2M107.92,96.1h1.2M120.94,96.1h1.2M133.96,96.1h1.2M146.98,96.1h1.2M160,96.1h1.2M173.02,96.1h1.2M186.04,96.1h1.2M199.06,96.1h1.2M212.08,96.1h1.2M225.1,96.1h1.2M238.12,96.1h1.2M251.14,96.1h1.2M264.16,96.1h1.2M277.18,96.1h1.2M290.2,96.1h1.2M303.22,96.1h1.2M316.24,96.1h1.2M329.26,96.1h1.2M342.28,96.1h1.2M355.3,96.1h1.2M368.32,96.1h1.2M381.34,96.1h1.2M394.36,96.1h1.2M407.38,96.1h1.2M420.4,96.1h1.2M433.42,96.1h1.2M446.44,96.1h1.2M459.46,96.1h1.2M472.48,96.1h1.2M485.5,96.1h1.2M498.52,96.1h1.2M511.54,96.1h1.2M524.56,96.1h1.2M537.58,96.1h1.2M550.6,96.1h1.2M563.62,96.1h1.2M576.64,96.1h1.2M589.66,96.1h1.2M602.68,96.1h1.2M615.7,96.1h1.2M628.72,96.1h1.2M641.74,96.1h1.2M654.76,96.1h1.2M667.78,96.1h1.2M42.82,138.5h1.2M55.84,138.5h1.2M68.86,138.5h1.2M81.88,138.5h1.2M94.9,138.5h1.2M107.92,138.5h1.2M120.94,138.5h1.2M133.96,138.5h1.2M146.98,138.5h1.2M160,138.5h1.2M173.02,138.5h1.2M186.04,138.5h1.2M199.06,138.5h1.2M212.08,138.5h1.2M225.1,138.5h1.2M238.12,138.5h1.2M251.14,138.5h1.2M264.16,138.5h1.2M277.18,138.5h1.2M290.2,138.5h1.2M303.22,138.5h1.2M316.24,138.5h1.2M329.26,138.5h1.2M342.28,138.5h1.2M355.3,138.5h1.2M368.32,138.5h1.2M381.34,138.5h1.2M394.36,138.5h1.2M407.38,138.5h1.2M420.4,138.5h1.2M433.42,138.5h1.2M446.44,138.5h1.2M459.46,138.5h1.2M472.48,138.5h1.2M485.5,138.5h1.2M498.52,138.5h1.2M511.54,138.5h1.2M524.56,138.5h1.2M537.58,138.5h1.2M550.6,138.5h1.2M563.62,138.5h1.2M576.64,138.5h1.2M589.66,138.5h1.2M602.68,138.5h1.2M615.7,138.5h1.2M628.72,138.5h1.2M641.74,138.5h1.2M654.76,138.5h1.2M667.78,138.5h1.2M42.82,180.9h1.2M55.84,180.9h1.2M68.86,180.9h1.2M81.88,180.9h1.2M94.9,180.9h1.2M107.92,180.9h1.2M120.94,180.9h1.2M133.96,180.9h1.2M146.98,180.9h1.2M160,180.9h1.2M173.02,180.9h1.2M186.04,180.9h1.2M199.06,180.9h1.2M212.08,180.9h1.2M225.1,180.9h1.2M238.12,180.9h1.2M251.14,180.9h1.2M264.16,180.9h1.2M277.18,180.9h1.2M290.2,180.9h1.2M303.22,180.9h1.2M316.24,180.9h1.2M329.26,180.9h1.2M342.28,180.9h1.2M355.3,180.9h1.2M368.32,180.9h1.2M381.34,180.9h1.2M394.36,180.9h1.2M407.38,180.9h1.2M420.4,180.9h1.2M433.42,180.9h1.2M446.44,180.9h1.2M459.46,180.9h1.2M472.48,180.9h1.2M485.5,180.9h1.2M498.52,180.9h1.2M511.54,180.9h1.2M524.56,180.9h1.2M537.58,180.9h1.2M550.6,180.9h1.2M563.62,180.9h1.2M576.64,180.9h1.2M589.66,180.9h1.2M602.68,180.9h1.2M615.7,180.9h1.2M628.72,180.9h1.2M641.74,180.9h1.2M654.76,180.9h1.2M667.78,180.9h1.2M42.82,265.7h1.2M55.84,265.7h1.2M68.86,265.7h1.2M81.88,265.7h1.2M94.9,265.7h1.2M107.92,265.7h1.2M120.94,265.7h1.2M133.96,265.7h1.2M146.98,265.7h1.2M160,265.7h1.2M173.02,265.7h1.2M186.04,265.7h1.2M199.06,265.7h1.2M212.08,265.7h1.2M225.1,265.7h1.2M238.12,265.7h1.2M251.14,265.7h1.2M264.16,265.7h1.2M277.18,265.7h1.2M290.2,265.7h1.2M303.22,265.7h1.2M316.24,265.7h1.2M329.26,265.7h1.2M342.28,265.7h1.2M355.3,265.7h1.2M368.32,265.7h1.2M381.34,265.7h1.2M394.36,265.7h1.2M407.38,265.7h1.2M420.4,265.7h1.2M433.42,265.7h1.2M446.44,265.7h1.2M459.46,265.7h1.2M472.48,265.7h1.2M485.5,265.7h1.2M498.52,265.7h1.2M511.54,265.7h1.2M524.56,265.7h1.2M537.58,265.7h1.2M550.6,265.7h1.2M563.62,265.7h1.2M576.64,265.7h1.2M589.66,265.7h1.2M602.68,265.7h1.2M615.7,265.7h1.2M628.72,265.7h1.2M641.74,265.7h1.2M654.76,265.7h1.2M667.78,265.7h1.2M42.82,308.1h1.2M55.84,308.1h1.2M68.86,308.1h1.2M81.88,308.1h1.2M94.9,308.1h1.2M107.92,308.1h1.2M120.94,308.1h1.2M133.96,308.1h1.2M146.98,308.1h1.2M160,308.1h1.2M173.02,308.1h1.2M186.04,308.1h1.2M199.06,308.1h1.2M212.08,308.1h1.2M225.1,308.1h1.2M238.12,308.1h1.2M251.14,308.1h1.2M264.16,308.1h1.2M277.18,308.1h1.2M290.2,308.1h1.2M303.22,308.1h1.2M316.24,308.1h1.2M329.26,308.1h1.2M342.28,308.1h1.2M355.3,308.1h1.2M368.32,308.1h1.2M381.34,308.1h1.2M394.36,308.1h1.2M407.38,308.1h1.2M420.4,308.1h1.2M433.42,308.1h1.2M446.44,308.1h1.2M459.46,308.1h1.2M472.48,308.1h1.2M485.5,308.1h1.2M498.52,308.1h1.2M511.54,308.1h1.2M524.56,308.1h1.2M537.58,308.1h1.2M550.6,308.1h1.2M563.62,308.1h1.2M576.64,308.1h1.2M589.66,308.1h1.2M602.68,308.1h1.2M615.7,308.1h1.2M628.72,308.1h1.2M641.74,308.1h1.2M654.76,308.1h1.2M667.78,308.1h1.2M42.82,350.5h1.2M55.84,350.5h1.2M68.86,350.5h1.2M81.88,350.5h1.2M94.9,350.5h1.2M107.92,350.5h1.2M120.94,350.5h1.2M133.96,350.5h1.2M146.98,350.5h1.2M160,350.5h1.2M173.02,350.5h1.2M186.04,350.5h1.2M199.06,350.5h1.2M212.08,350.5h1.2M225.1,350.5h1.2M238.12,350.5h1.2M251.14,350.5h1.2M264.16,350.5h1.2M277.18,350.5h1.2M290.2,350.5h1.2M303.22,350.5h1.2M316.24,350.5h1.2M329.26,350.5h1.2M342.28,350.5h1.2M355.3,350.5h1.2M368.32,350.5h1.2M381.34,350.5h1.2M394.36,350.5h1.2M407.38,350.5h1.2M420.4,350.5h1.2M433.42,350.5h1.2M446.44,350.5h1.2M459.46,350.5h1.2M472.48,350.5h1.2M485.5,350.5h1.2M498.52,350.5h1.2M511.54,350.5h1.2M524.56,350.5h1.2M537.58,350.5h1.2M550.6,350.5h1.2M563.62,350.5h1.2M576.64,350.5h1.2M589.66,350.5h1.2M602.68,350.5h1.2M615.7,350.5h1.2M628.72,350.5h1.2M641.74,350.5h1.2M654.76,350.5h1.2M667.78,350.5h1.2M42.82,392.9h1.2M55.84,392.9h1.2M68.86,392.9h1.2M81.88,392.9h1.2M94.9,392.9h1.2M107.92,392.9h1.2M120.94,392.9h1.2M133.96,392.9h1.2M146.98,392.9h1.2M160,392.9h1.2M173.02,392.9h1.2M186.04,392.9h1.2M199.06,392.9h1.2M212.08,392.9h1.2M225.1,392.9h1.2M238.12,392.9h1.2M251.14,392.9h1.2M264.16,392.9h1.2M277.18,392.9h1.2M290.2,392.9h1.2M303.22,392.9h1.2M316.24,392.9h1.2M329.26,392.9h1.2M342.28,392.9h1.2M355.3,392.9h1.2M368.32,392.9h1.2M381.34,392.9h1.2M394.36,392.9h1.2M407.38,392.9h1.2M420.4,392.9h1.2M433.42,392.9h1.2M446.44,392.9h1.2M459.46,392.9h1.2M472.48,392.9h1.2M485.5,392.9h1.2M498.52,392.9h1.2M511.54,392.9h1.2M524.56,392.9h1.2M537.58,392.9h1.2M550.6,392.9h1.2M563.62,392.9h1.2M576.64,392.9h1.2M589.66,392.9h1.2M602.68,392.9h1.2M615.7,392.9h1.2M628.72,392.9h1.2M641.74,392.9h1.2M654.76,392.9h1.2M667.78,392.9h1.2M94.9,19.78h1.2M94.9,28.26h1.2M94.9,36.74h1.2M94.9,45.22h1.2M94.9,62.18h1.2M94.9,70.66h1.2M94.9,79.14h1.2M94.9,87.62h1.2M94.9,104.58h1.2M94.9,113.06h1.2M94.9,121.54h1.2M94.9,130.02h1.2M94.9,146.98h1.2M94.9,155.46h1.2M94.9,163.94h1.2M94.9,172.42h1.2M94.9,189.38h1.2M94.9,197.86h1.2M94.9,206.34h1.2M94.9,214.82h1.2M94.9,231.78h1.2M94.9,240.26h1.2M94.9,248.74h1.2M94.9,257.22h1.2M94.9,274.18h1.2M94.9,282.66h1.2M94.9,291.14h1.2M94.9,299.62h1.2M94.9,316.58h1.2M94.9,325.06h1.2M94.9,333.54h1.2M94.9,342.02h1.2M94.9,358.98h1.2M94.9,367.46h1.2M94.9,375.94h1.2M94.9,384.42h1.2M94.9,401.38h1.2M94.9,409.86h1.2M94.9,418.34h1.2M94.9,426.82h1.2M160,19.78h1.2M160,28.26h1.2M160,36.74h1.2M160,45.22h1.2M160,62.18h1.2M160,70.66h1.2M160,79.14h1.2M160,87.62h1.2M160,104.58h1.2M160,113.06h1.2M160,121.54h1.2M160,130.02h1.2M160,146.98h1.2M160,155.46h1.2M160,163.94h1.2M160,172.42h1.2M160,189.38h1.2M160,197.86h1.2M160,206.34h1.2M160,214.82h1.2M160,231.78h1.2M160,240.26h1.2M160,248.74h1.2M160,257.22h1.2M160,274.18h1.2M160,282.66h1.2M160,291.14h1.2M160,299.62h1.2M160,316.58h1.2M160,325.06h1.2M160,333.54h1.2M160,342.02h1.2M160,358.98h1.2M160,367.46h1.2M160,375.94h1.2M160,384.42h1.2M160,401.38h1.2M160,409.86h1.2M160,418.34h1.2M160,426.82h1.2M225.1,19.78h1.2M225.1,28.26h1.2M225.1,36.74h1.2M225.1,45.22h1.2M225.1,62.18h1.2M225.1,70.66h1.2M225.1,79.14h1.2M225.1,87.62h1.2M225.1,104.58h1.2M225.1,113.06h1.2M225.1,121.54h1.2M225.1,130.02h1.2M225.1,146.98h1.2M225.1,155.46h1.2M225.1,163.94h1.2M225.1,172.42h1.2M225.1,189.38h1.2M225.1,197.86h1.2M225.1,206.34h1.2M225.1,214.82h1.2M225.1,231.78h1.2M225.1,240.26h1.2M225.1,248.74h1.2M225.1,257.22h1.2M225.1,274.18h1.2M225.1,282.66h1.2M225.1,291.14h1.2M225.1,299.62h1.2M225.1,316.58h1.2M225.1,325.06h1.2M225.1,333.54h1.2M225.1,342.02h1.2M225.1,358.98h1.2M225.1,367.46h1.2M225.1,375.94h1.2M225.1,384.42h1.2M225.1,401.38h1.2M225.1,409.86h1.2M225.1,418.34h1.2M225.1,426.82h1.2M290.2,19.78h1.2M290.2,28.26h1.2M290.2,36.74h1.2M290.2,45.22h1.2M290.2,62.18h1.2M290.2,70.66h1.2M290.2,79.14h1.2M290.2,87.62h1.2M290.2,104.58h1.2M290.2,113.06h1.2M290.2,121.54h1.2M290.2,130.02h1.2M290.2,146.98h1.2M290.2,155.46h1.2M290.2,163.94h1.2M290.2,172.42h1.2M290.2,189.38h1.2M290.2,197.86h1.2M290.2,206.34h1.2M290.2,214.82h1.2M290.2,231.78h1.2M290.2,240.26h1.2M290.2,248.74h1.2M290.2,257.22h1.2M290.2,274.18h1.2M290.2,282.66h1.2M290.2,291.14h1.2M290.2,299.62h1.2M290.2,316.58h1.2M290.2,325.06h1.2M290.2,333.54h1.2M290.2,342.02h1.2M290.2,358.98h1.2M290.2,367.46h1.2M290.2,375.94h1.2M290.2,384.42h1.2M290.2,401.38h1.2M290.2,409.86h1.2M290.2,418.34h1.2M290.2,426.82h1.2M420.4,19.78h1.2M420.4,28.26h1.2M420.4,36.74h1.2M420.4,45.22h1.2M420.4,62.18h1.2M420.4,70.66h1.2M420.4,79.14h1.2M420.4,87.62h1.2M420.4,104.58h1.2M420.4,113.06h1.2M420.4,121.54h1.2M420.4,130.02h1.2M420.4,146.98h1.2M420.4,155.46h1.2M420.4,163.94h1.2M420.4,172.42h1.2M420.4,189.38h1.2M420.4,197.86h1.2M420.4,206.34h1.2M420.4,214.82h1.2M420.4,231.78h1.2M420.4,240.26h1.2M420.4,248.74h1.2M420.4,257.22h1.2M420.4,274.18h1.2M420.4,282.66h1.2M420.4,291.14h1.2M420.4,299.62h1.2M420.4,316.58h1.2M420.4,325.06h1.2M420.4,333.54h1.2M420.4,342.02h1.2M420.4,358.98h1.2M420.4,367.46h1.2M420.4,375.94h1.2M420.4,384.42h1.2M420.4,401.38h1.2M420.4,409.86h1.2M420.4,418.34h1.2M420.4,426.82h1.2M485.5,19.78h1.2M485.5,28.26h1.2M485.5,36.74h1.2M485.5,45.22h1.2M485.5,62.18h1.2M485.5,70.66h1.2M485.5,79.14h1.2M485.5,87.62h1.2M485.5,104.58h1.2M485.5,113.06h1.2M485.5,121.54h1.2M485.5,130.02h1.2M485.5,146.98h1.2M485.5,155.46h1.2M485.5,163.94h1.2M485.5,172.42h1.2M485.5,189.38h1.2M485.5,197.86h1.2M485.5,206.34h1.2M485.5,214.82h1.2M485.5,231.78h1.2M485.5,240.26h1.2M485.5,248.74h1.2M485.5,257.22h1.2M485.5,274.18h1.2M485.5,282.66h1.2M485.5,291.14h1.2M485.5,299.62h1.2M485.5,316.58h1.2M485.5,325.06h1.2M485.5,333.54h1.2M485.5,342.02h1.2M485.5,358.98h1.2M485.5,367.46h1.2M485.5,375.94h1.2M485.5,384.42h1.2M485.5,401.38h1.2M485.5,409.86h1.2M485.5,418.34h1.2M485.5,426.82h1.2M550.6,19.78h1.2M550.6,28.26h1.2M550.6,36.74h1.2M550.6,45.22h1.2M550.6,62.18h1.2M550.6,70.66h1.2M550.6,79.14h1.2M550.6,87.62h1.2M550.6,104.58h1.2M550.6,113.06h1.2M550.6,121.54h1.2M550.6,130.02h1.2M550.6,146.98h1.2M550.6,155.46h1.2M550.6,163.94h1.2M550.6,172.42h1.2M550.6,189.38h1.2M550.6,197.86h1.2M550.6,206.34h1.2M550.6,214.82h1.2M550.6,231.78h1.2M550.6,240.26h1.2M550.6,248.74h1.2M550.6,257.22h1.2M550.6,274.18h1.2M550.6,282.66h1.2M550.6,291.14h1.2M550.6,299.62h1.2M550.6,316.58h1.2M550.6,325.06h1.2M550.6,333.54h1.2M550.6,342.02h1.2M550.6,358.98h1.2M550.6,367.46h1.2M550.6,375.94h1.2M550.6,384.42h1.2M550.6,401.38h1.2M550.6,409.86h1.2M550.6,418.34h1.2M550.6,426.82h1.2M615.7,19.78h1.2M615.7,28.26h1.2M615.7,36.74h1.2M615.7,45.22h1.2M615.7,62.18h1.2M615.7,70.66h1.2M615.7,79.14h1.2M615.7,87.62h1.2M615.7,104.58h1.2M615.7,113.06h1.2M615.7,121.54h1.2M615.7,130.02h1.2M615.7,146.98h1.2M615.7,155.46h1.2M615.7,163.94h1.2M615.7,172.42h1.2M615.7,189.38h1.2M615.7,197.86h1.2M615.7,206.34h1.2M615.7,214.82h1.2M615.7,231.78h1.2M615.7,240.26h1.2M615.7,248.74h1.2M615.7,257.22h1.2M615.7,274.18h1.2M615.7,282.66h1.2M615.7,291.14h1.2M615.7,299.62h1.2M615.7,316.58h1.2M615.7,325.06h1.2M615.7,333.54h1.2M615.7,342.02h1.2M615.7,358.98h1.2M615.7,367.46h1.2M615.7,375.94h1.2M615.7,384.42h1.2M615.7,401.38h1.2M615.7,409.86h1.2M615.7,418.34h1.2M615.7,426.82h1.2" stroke="#8a8a6c" stroke-opacity="0.35" stroke-width="1.2" fill="none"/>
<rect x="355.40" y="11.0" width="1.3" height="424.0" fill="#70806a" fill-opacity="0.36"/>
<rect x="30.0" y="223" width="651.0" height="1" fill="#80804a" fill-opacity="0.3"/>
<path d="M353.3,19.78h5.4M353.3,28.26h5.4M353.3,36.74h5.4M353.3,45.22h5.4M353.3,62.18h5.4M353.3,70.66h5.4M353.3,79.14h5.4M353.3,87.62h5.4M353.3,104.58h5.4M353.3,113.06h5.4M353.3,121.54h5.4M353.3,130.02h5.4M353.3,146.98h5.4M353.3,155.46h5.4M353.3,163.94h5.4M353.3,172.42h5.4M353.3,189.38h5.4M353.3,197.86h5.4M353.3,206.34h5.4M353.3,214.82h5.4M353.3,231.78h5.4M353.3,240.26h5.4M353.3,248.74h5.4M353.3,257.22h5.4M353.3,274.18h5.4M353.3,282.66h5.4M353.3,291.14h5.4M353.3,299.62h5.4M353.3,316.58h5.4M353.3,325.06h5.4M353.3,333.54h5.4M353.3,342.02h5.4M353.3,358.98h5.4M353.3,367.46h5.4M353.3,375.94h5.4M353.3,384.42h5.4M353.3,401.38h5.4M353.3,409.86h5.4M353.3,418.34h5.4M353.3,426.82h5.4" stroke="#a09a80" stroke-opacity="0.42" stroke-width="1.1" fill="none"/>
<path d="M351.5,53.7h9M351.5,96.1h9M351.5,138.5h9M351.5,180.9h9M351.5,223.3h9M351.5,265.7h9M351.5,308.1h9M351.5,350.5h9M351.5,392.9h9" stroke="#a09a80" stroke-opacity="0.34" stroke-width="1.1" fill="none"/>
<path d="M43.5,221v5M56.5,221v5M69.5,221v5M82.5,221v5M95.5,219.5v8M108.5,221v5M121.5,221v5M134.5,221v5M147.5,221v5M160.5,219.5v8M173.5,221v5M186.5,221v5M199.5,221v5M212.5,221v5M225.5,219.5v8M238.5,221v5M251.5,221v5M264.5,221v5M277.5,221v5M290.5,219.5v8M303.5,221v5M316.5,221v5M329.5,221v5M342.5,221v5M355.5,219.5v8M368.5,221v5M381.5,221v5M394.5,221v5M407.5,221v5M420.5,219.5v8M434.5,221v5M447.5,221v5M460.5,221v5M473.5,221v5M486.5,219.5v8M499.5,221v5M512.5,221v5M525.5,221v5M538.5,221v5M551.5,219.5v8M564.5,221v5M577.5,221v5M590.5,221v5M603.5,221v5M616.5,219.5v8M629.5,221v5M642.5,221v5M655.5,221v5M668.5,221v5" stroke="#6a6a20" stroke-opacity="0.32" stroke-width="1" fill="none"/>
<rect x="200.5" y="4.8" width="309" height="1.5" fill="#a09800"/>
<path d="M201.5,1.5 H199.8 V9.8 H201.5" fill="none" stroke="#b4b4c4" stroke-width="1.2"/>
<path d="M508.5,1.5 H510.2 V9.8 H508.5" fill="none" stroke="#b4b4c4" stroke-width="1.2"/>
<rect x="352.8" y="1" width="5.6" height="9.2" rx="1" fill="#ffa000"/>
<path d="M353.6,3 H357.6 M355.6,3 V9.6" stroke="#000" stroke-width="1.2" fill="none"/>
<path d="M352,10.8 H359.4 L355.7,14.8Z" fill="#ffa000"/>
<path d="M351.2,15.4 H360 V22 L355.6,25.4 L351.2,22Z" fill="#ffa000"/>
<path d="M353,17.4 H358.2 M355.6,17.4 V23.4" stroke="#000" stroke-width="1.3" fill="none"/>
<text x="16.2" y="9.6" style="font-family:'Liberation Serif',serif;font-size:13.5px;font-weight:bold;fill:#52009a;stroke:#52009a;stroke-width:.5px;letter-spacing:-.4px">Tek</text>
<text x="38.8" y="8.6" class="w" style="font-size:10px;fill:#fff;stroke:#fff;stroke-width:.55px;letter-spacing:.3px">Run</text>
<text x="619.6" y="8.6" class="w" style="font-size:10px;fill:#fff;stroke:#fff;stroke-width:.55px;letter-spacing:.35px">Trig'd</text>
<path d="M16.3,218.6 H24.6 L29,223.6 L24.6,228.8 H16.3Z" fill="#ffff00" stroke="#2a2a50" stroke-width="0.8"/>
<text x="18" y="227.2" style="font-family:'Liberation Sans',sans-serif;font-weight:bold;font-size:10px;letter-spacing:0;fill:#000">1</text>
<path d="M16.5,387.4 H24.6 L28.8,392.6 L24.6,397.8 H16.5Z" fill="#000" stroke="#00d8e8" stroke-width="0.9"/>
<text x="18" y="396" style="font-family:'Liberation Sans',sans-serif;font-weight:bold;font-size:10px;letter-spacing:0;fill:#00e6e6">2</text>
<path d="M673.9,174.3 L678.1,170.7 V173.5 H681.2 V175.1 H678.1 V178Z" fill="#ffff00"/>
<rect x="29.5" y="436.7" width="361" height="12.7" rx="4.5" fill="#060602" stroke="#a8acc2" stroke-width="1.1"/>
<rect x="29.5" y="450.7" width="361" height="24.7" rx="4.5" fill="#060602" stroke="#a8acc2" stroke-width="1.1"/>
<rect x="396.8" y="436.7" width="95.6" height="24.1" rx="4.5" fill="#060602" stroke="#a8acc2" stroke-width="1.1"/>
<rect x="499.2" y="436.7" width="69" height="24.1" rx="4.5" fill="#060602" stroke="#a8acc2" stroke-width="1.1"/>
<rect x="575" y="436.7" width="106.4" height="24.1" rx="4.5" fill="#060602" stroke="#a8acc2" stroke-width="1.1"/>
<rect x="608.4" y="474.8" width="73" height="23" rx="4.5" fill="#060602" stroke="#a8acc2" stroke-width="1.1"/>
<rect x="33" y="438.4" width="16.4" height="10.4" rx="5.2" fill="#ffff00"/>
<text x="41.2" y="447.09999999999997" text-anchor="middle" style="font-family:'Liberation Sans',sans-serif;font-weight:bold;font-size:10px;letter-spacing:0;fill:#000">1</text>
<text x="61" y="446.8" class="y">1.00 V</text>
<rect x="123.6" y="438.4" width="16.4" height="10.4" rx="5.2" fill="#00e6e6"/>
<text x="131.79999999999998" y="447.09999999999997" text-anchor="middle" style="font-family:'Liberation Sans',sans-serif;font-weight:bold;font-size:10px;letter-spacing:0;fill:#000">2</text>
<text x="151" y="446.8" class="c">2.00 V</text>
<rect x="33" y="464.2" width="16.4" height="10.2" rx="5.1" fill="#00e6e6"/>
<text x="41.2" y="472.8" text-anchor="middle" style="font-family:'Liberation Sans',sans-serif;font-weight:bold;font-size:10px;letter-spacing:0;fill:#000">2</text>
<text x="55" y="472.8" class="c">+Width</text>
<text x="119.4" y="461.1" class="w">Value</text>
<text x="119.4" y="472.8" class="c" style="letter-spacing:.45px">123.2µs</text>
<text x="177" y="461.1" class="w">Mean</text>
<text x="177" y="472.8" class="c">1.272m</text>
<text x="231" y="461.1" class="w">Min</text>
<text x="231" y="472.8" class="c">122.4µ</text>
<text x="284" y="461.1" class="w">Max</text>
<text x="284" y="472.8" class="c">2.642m</text>
<text x="337" y="461.1" class="w">Std Dev</text>
<text x="337" y="472.8" class="c">822.0µ</text>
<text x="401.6" y="446.8" class="w">1.00ms</text>
<rect x="399.8" y="449.8" width="7.4" height="8.6" rx="1.5" fill="#ffa000"/>
<text x="403.55" y="457.5" text-anchor="middle" style="font-weight:bold;font-size:8.6px;letter-spacing:0;fill:#000">T</text>
<path d="M407.4,454.3 H413.4 M411.2,452.3 L413.6,454.3 L411.2,456.3" stroke="#ffa000" stroke-width="1.1" fill="none"/>
<path d="M414.8,452 H421.8 L418.3,456.5Z" fill="#ffa000"/>
<text x="426" y="457.8" class="o">0.00000 s</text>
<text x="503.6" y="446.8" class="w" style="letter-spacing:.55px">100MS/s</text>
<text x="503.6" y="457.7" class="w" style="letter-spacing:.55px">1M points</text>
<rect x="595" y="439.4" width="16.8" height="9.4" rx="4.7" fill="#ffff00"/>
<text x="603.4" y="447.59999999999997" text-anchor="middle" style="font-family:'Liberation Sans',sans-serif;font-weight:bold;font-size:10px;letter-spacing:0;fill:#000">1</text>
<path d="M620.6,447 H623.2 L625.6,440.6 H628.8" stroke="#f2f2f2" stroke-width="1.3" fill="none"/>
<text x="643" y="446.9" class="w">1.18 V</text>
<text x="612.6" y="485.3" class="w" xml:space="preserve">31 Mar  2008</text>
<text x="612.6" y="495.9" class="w">13:17:26</text>
</svg></body></html>
